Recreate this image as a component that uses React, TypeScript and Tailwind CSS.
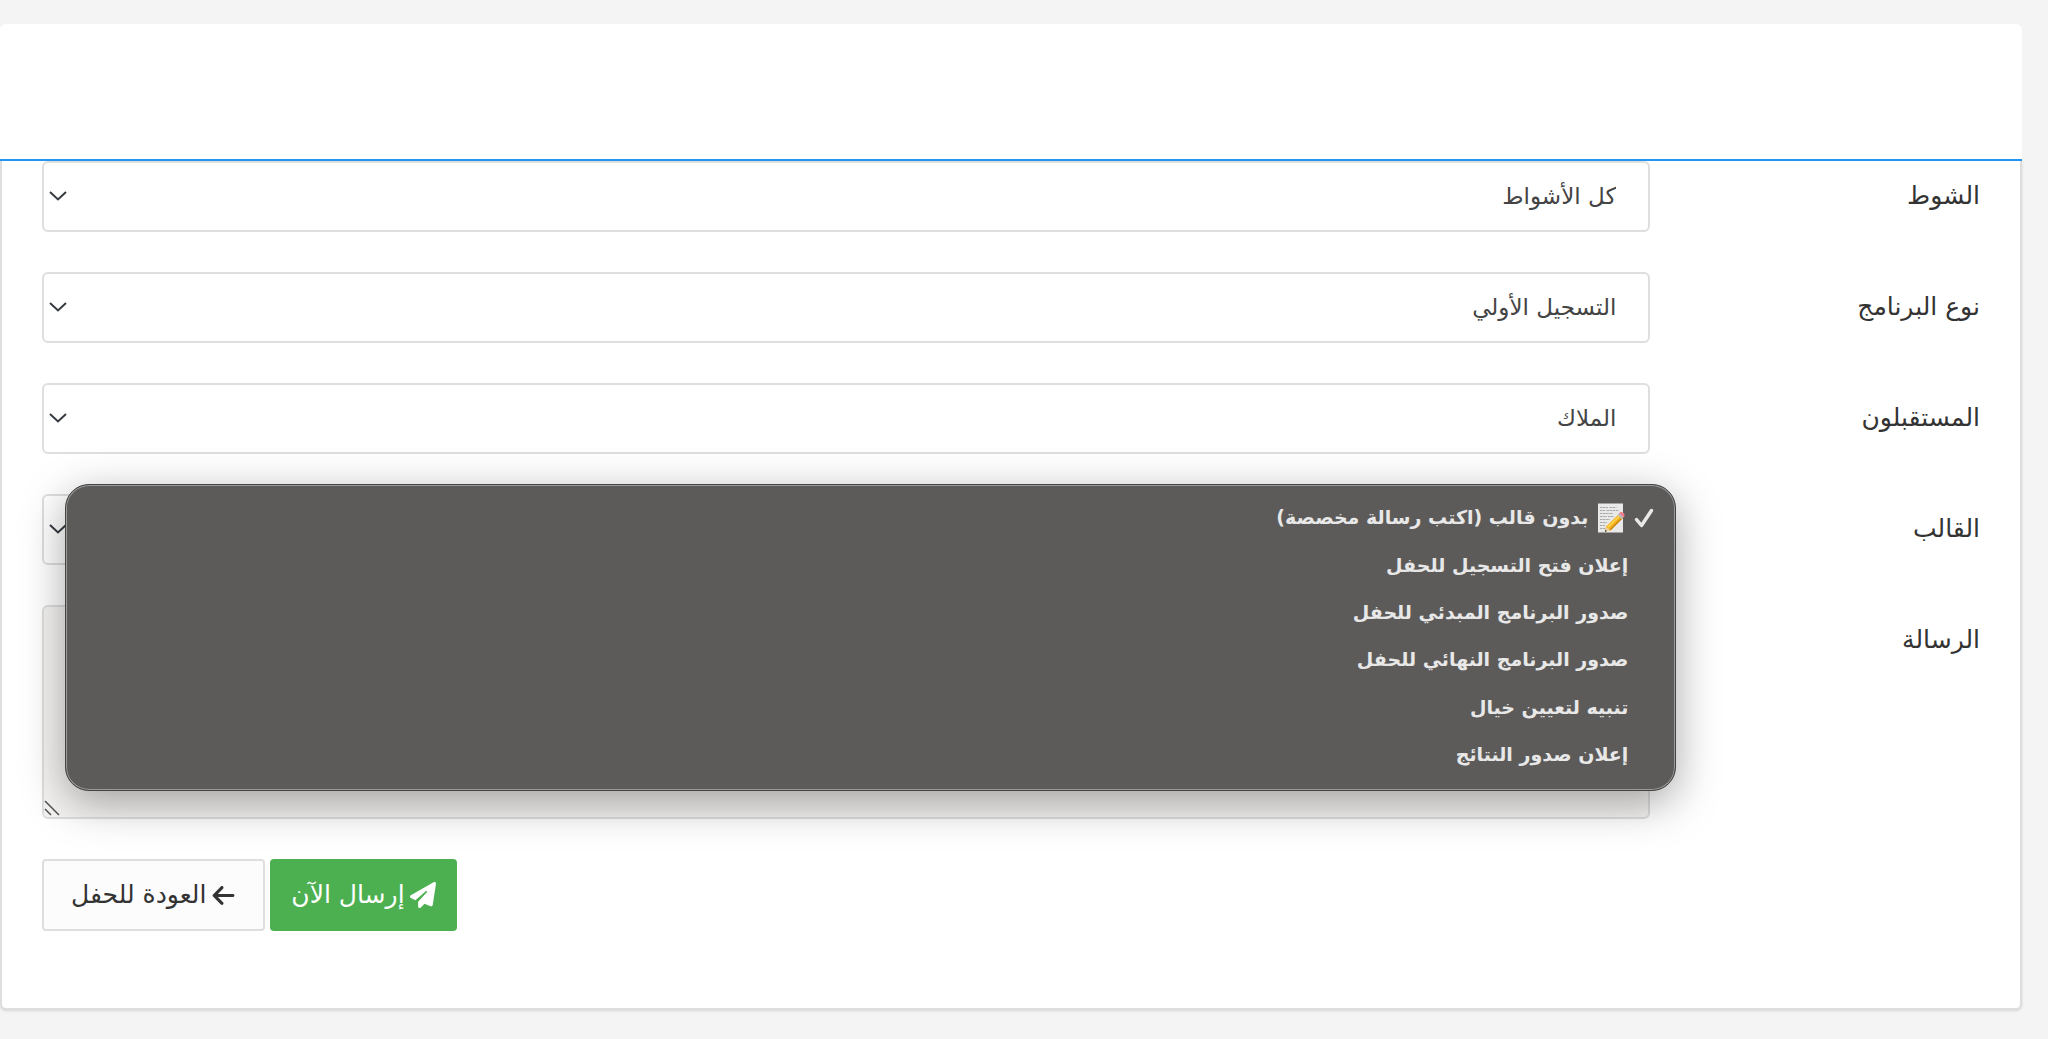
import { useState } from 'react';
import type { ReactNode } from 'react';
import { FaArrowLeft, FaPaperPlane } from 'react-icons/fa6';

const templates = [
    'بدون قالب (اكتب رسالة مخصصة)',
    'إعلان فتح التسجيل للحفل',
    'صدور البرنامج المبدئي للحفل',
    'صدور البرنامج النهائي للحفل',
    'تنبيه لتعيين خيال',
    'إعلان صدور النتائج',
];

function MemoIcon() {
    return (
        <svg viewBox="0 0 28 30" className="h-[30px] w-[28px] shrink-0" aria-hidden="true">
            <rect x="1" y="0.5" width="25" height="29" fill="#e9e9e9" />
            <path
                d="M3 4.5h8M12.500 4.500h7M3 7.500h5M9.500 7.500h12M3 10.500h13M3 13.500h7M11 13.500h6M3 16.500h10M3 19.500h7M3 22.500h5M3 25.500h6"
                stroke="#a8a8a8"
                strokeWidth="1"
                strokeDasharray="2.500 0.600"
            />
            <path d="M9 23.500l13-12.500 4 4-12.500 12.500-5.500 1z" fill="#f5b41d" />
            <path d="M11 24l12-11.500" stroke="#ffd85c" strokeWidth="1.500" />
            <path d="M13 27l12.500-12.500" stroke="#c67f10" strokeWidth="1.200" />
            <path d="M9 23.500l4.500 4-5.500 1z" fill="#ecd0a0" />
            <path d="M8.300 26.800l1.700 1.500-2.200 0.400z" fill="#333" />
            <path d="M20.500 12l1.800-1.700 4 4-1.700 1.700z" fill="#b9bcc0" />
            <path d="M22 10.500c1.500-1.800 3-1.800 4.500-0.400s1.500 2.800 0 4.300z" fill="#ee7f8a" />
        </svg>
    );
}

function Chevron() {
    return (
        <svg
            viewBox="0 0 18 10"
            className="pointer-events-none absolute top-[30px] left-[7px] h-[10px] w-[18px]"
            aria-hidden="true"
        >
            <path d="M1 1l8 7.500L17 1" fill="none" stroke="#343a40" strokeWidth="2" />
        </svg>
    );
}

function Row({ id, label, children }: { id: string; label: string; children: ReactNode }) {
    return (
        <div className="flex items-start">
            <label htmlFor={id} className="w-1/6 px-5 pt-[18px] text-[25px] leading-[34px]">
                {label}
            </label>
            <div className="w-5/6 px-5">
                <div className="relative">{children}</div>
            </div>
        </div>
    );
}

function Select({ id, options }: { id: string; options: string[] }) {
    return (
        <>
            <select
                id={id}
                className="block h-[71px] w-full appearance-none rounded-[6px] border-2 border-[#dedede] bg-white px-8 text-[23px] text-[#444]"
            >
                {options.map(o => (
                    <option key={o}>{o}</option>
                ))}
            </select>
            <Chevron />
        </>
    );
}

export default function App() {
    const [template, setTemplate] = useState(0);

    return (
        <div
            dir="rtl"
            className="min-h-screen bg-[#f4f4f4] pt-6 pr-[26px] pb-6 font-['DejaVu_Sans',sans-serif] text-[#333]"
        >
            <header className="h-[137px] rounded-t-[6px] border-b-2 border-[#2196f3] bg-white" />
            <form
                onSubmit={e => e.preventDefault()}
                className="flex flex-col gap-10 rounded-b-[6px] border-2 border-t-0 border-[#dedede] bg-white px-5 pb-[77px] shadow-sm"
            >
                <Row id="round" label="الشوط">
                    <Select id="round" options={['كل الأشواط']} />
                </Row>
                <Row id="program" label="نوع البرنامج">
                    <Select id="program" options={['التسجيل الأولي']} />
                </Row>
                <Row id="recipients" label="المستقبلون">
                    <Select id="recipients" options={['الملاك']} />
                </Row>
                <Row id="template" label="القالب">
                    <Select id="template" options={[templates[template]]} />
                    <ul
                        role="listbox"
                        aria-label="القالب"
                        className="absolute -top-[10px] -right-[26px] left-[23px] z-10 flex h-[307px] flex-col rounded-[24px] border border-[#444] bg-[#5c5b59] pt-[9px] pb-3 shadow-[0_12px_44px_rgba(0,0,0,0.35)] ring-1 ring-[#9a9a9a] ring-inset"
                    >
                        {templates.map((t, i) => (
                            <li key={t} className="flex flex-1">
                                <button
                                    type="button"
                                    role="option"
                                    aria-selected={i === template}
                                    onClick={() => setTemplate(i)}
                                    className="flex w-full items-center pr-[21px] text-[19px] font-bold text-[#e8e8e8]"
                                >
                                    <span className="w-[26px] shrink-0">
                                        {i === template && (
                                            <svg viewBox="0 0 20 20" className="size-5" aria-hidden="true">
                                                <path
                                                    d="M2.500 11.500l5 6L17.500 2.500"
                                                    fill="none"
                                                    stroke="#e8e8e8"
                                                    strokeWidth="3.500"
                                                    strokeLinecap="round"
                                                    strokeLinejoin="round"
                                                />
                                            </svg>
                                        )}
                                    </span>
                                    {i === 0 && (
                                        <span className="pr-[3px] pl-[9px]">
                                            <MemoIcon />
                                        </span>
                                    )}
                                    {t}
                                </button>
                            </li>
                        ))}
                    </ul>
                </Row>
                <Row id="message" label="الرسالة">
                    <textarea
                        id="message"
                        readOnly
                        className="block h-[214px] w-full resize-none rounded-[6px] border-2 border-[#dedede] bg-[#f5f4f2] px-8 py-4 text-[23px]"
                    />
                    <svg
                        viewBox="0 0 16 16"
                        className="pointer-events-none absolute bottom-[3px] left-[2px] size-4"
                        aria-hidden="true"
                    >
                        <path d="M1 1l14 14M1 9l6 6" stroke="#555" strokeWidth="1.500" />
                    </svg>
                </Row>
                <div className="flex justify-end gap-[5px] px-5 text-[25px]">
                    <button
                        type="submit"
                        className="flex h-[72px] items-center gap-[5px] rounded-[4px] bg-[#4caf50] px-[21px] text-white"
                    >
                        <FaPaperPlane className="size-[26px]" />
                        إرسال الآن
                    </button>
                    <a
                        href="#event"
                        className="flex h-[72px] items-center gap-[5px] rounded-[4px] border-2 border-[#dedede] bg-[#fcfcfc] px-[27px]"
                    >
                        <FaArrowLeft className="size-[25px]" />
                        العودة للحفل
                    </a>
                </div>
            </form>
        </div>
    );
}
